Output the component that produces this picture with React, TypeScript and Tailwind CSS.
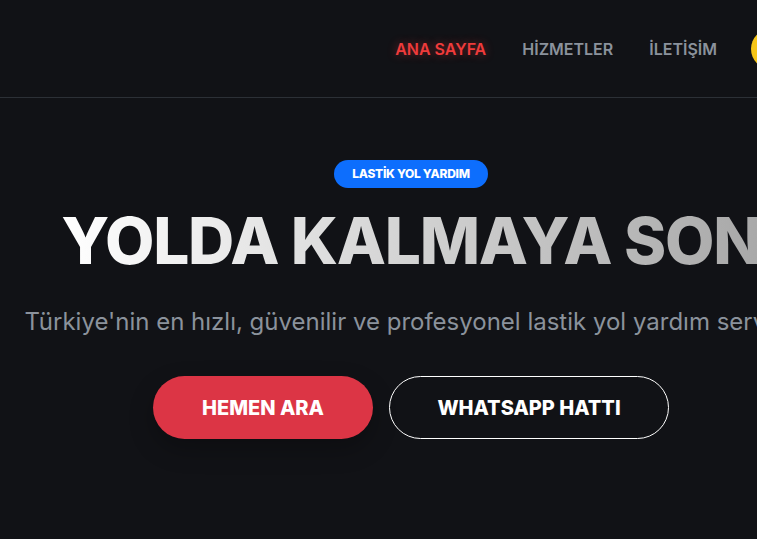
import React from "react";

export default function App() {
  return (
    <div
      className="min-h-[539px] w-[822px] bg-[#111216] text-white"
      style={{ fontFamily: "Inter, 'Noto Sans', sans-serif" }}
    >
      <header className="h-[98px] border-b border-[#2c3036] flex items-center justify-end pr-[31px]">
        <nav className="flex items-center gap-[36px] text-[16px] font-semibold">
          <a className="text-[#ef3b3b] [text-shadow:0_0_10px_rgba(239,59,59,0.45)]">ANA SAYFA</a>
          <a className="text-[#8b929c]">HİZMETLER</a>
          <a className="text-[#8b929c]">İLETİŞİM</a>
          <div className="w-10 h-10 rounded-full bg-[#f5c518] ml-[-2px]" />
        </nav>
      </header>
      <main className="flex flex-col items-center pt-[62px]">
        <span className="rounded-full bg-[#0d6efd] px-[18px] h-[28px] flex items-center text-[12px] font-extrabold tracking-tight">
          LASTİK YOL YARDIM
        </span>
        <h1 className="mt-[18px] whitespace-nowrap text-[64px] leading-[1.1] font-extrabold tracking-[-0.02em] bg-gradient-to-r from-white to-[#a8a8a8] bg-clip-text text-transparent">
          YOLDA KALMAYA SON
        </h1>
        <p className="mt-[28px] whitespace-nowrap text-[24px] text-[#8b929c]">
          Türkiye'nin en hızlı, güvenilir ve profesyonel lastik yol yardım servisi.
        </p>
        <div className="mt-[36px] flex gap-4">
          <button className="w-[220px] h-[63px] rounded-full bg-[#dc3545] text-[20px] font-extrabold shadow-[0_10px_25px_rgba(0,0,0,0.25)]">
            HEMEN ARA
          </button>
          <button className="w-[280px] h-[63px] rounded-full border border-white text-[20px] font-extrabold">
            WHATSAPP HATTI
          </button>
        </div>
      </main>
    </div>
  );
}
